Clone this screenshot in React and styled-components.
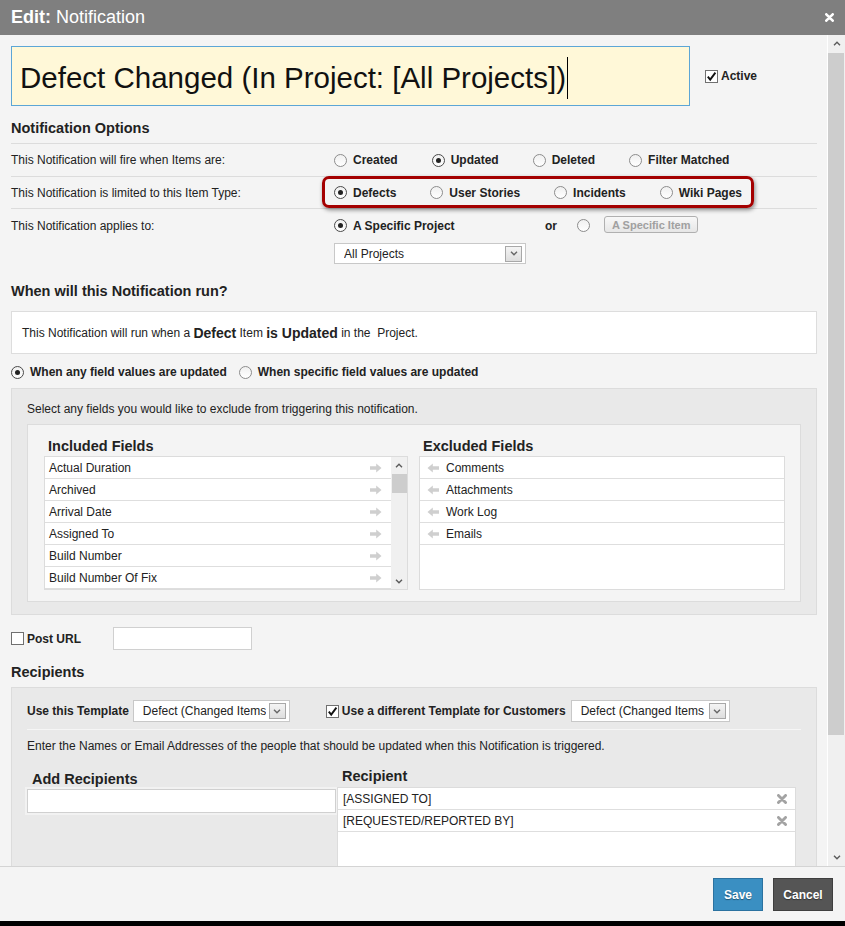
import React from 'react'
import styled, { createGlobalStyle } from 'styled-components'

const font = `"Liberation Sans", Arial, sans-serif`

const GlobalStyle = createGlobalStyle`
    html, body {
        margin: 0;
        background: #000;
    }
    body {
        font-family: ${font};
        font-size: 12px;
        color: #222;
    }
    * { box-sizing: border-box; }
`

const Dialog = styled.div`
    width: 845px;
    height: 921px;
    display: flex;
    flex-direction: column;
    background: #f4f4f4;
`
const TitleBar = styled.div`
    height: 35px;
    flex: 0 0 35px;
    background: #7f7f7f;
    color: #fff;
    font-size: 18px;
    display: flex;
    align-items: center;
    justify-content: space-between;
    padding: 0 11px 0 11px;

    b { font-weight: bold; }
`
const Body = styled.div`
    flex: 1 1 auto;
    display: flex;
    overflow: hidden;
`
const Content = styled.div`
    flex: 1 1 auto;
    padding: 11px 10px 0 11px;
    overflow: hidden;
`
const ScrollTrack = styled.div`
    width: 18px;
    flex: 0 0 18px;
    border-left: 1px solid #fff;
    background: #f0f0f0;
    display: flex;
    flex-direction: column;
`
const ScrollBtn = styled.div`
    height: 17px;
    flex: 0 0 17px;
    display: flex;
    align-items: center;
    justify-content: center;
`
const ScrollThumb = styled.div`
    height: ${p => p.$h}px;
    flex: 0 0 auto;
    margin: 1px 1px 0 0;
    background: #cdcdcd;
`
const ScrollRest = styled.div`
    flex: 1 1 auto;
`

const NameRow = styled.div`
    display: flex;
    align-items: center;
`
const NameInput = styled.div`
    width: 679px;
    height: 60px;
    background: #fff8d8;
    border: 1px solid #5ca6d6;
    display: flex;
    align-items: center;
    padding: 3px 0 0 8px;
    font-size: 29.5px;
    color: #111;
    white-space: nowrap;
`
const Caret = styled.span`
    display: inline-block;
    width: 1px;
    height: 42px;
    background: #000;
    margin-left: 1px;
`
const CheckLabel = styled.label`
    display: inline-flex;
    align-items: center;
    gap: 3px;
    font-weight: bold;
    font-size: 12px;
    margin-left: ${p => p.$ml || 0}px;
    margin-right: ${p => p.$mr || 0}px;
`
const Box = styled.span`
    width: 13px;
    height: 13px;
    flex: 0 0 13px;
    border: 1px solid #707070;
    background: #fff;
    display: inline-flex;
    align-items: center;
    justify-content: center;
`

const SectionTitle = styled.div`
    font-size: 14.5px;
    font-weight: bold;
    line-height: 17px;
    margin-top: ${p => p.$mt}px;
    margin-bottom: ${p => p.$mb}px;
`

const OptionTable = styled.div`
    border-top: 1px solid #dcdcdc;
`
const OptionRow = styled.div`
    position: relative;
    display: flex;
    align-items: ${p => p.$top ? 'flex-start' : 'center'};
    height: ${p => p.$h ? p.$h + 'px' : 'auto'};
    padding-top: ${p => p.$top ? 9 : 0}px;
    border-bottom: ${p => p.$last ? 'none' : '1px solid #dcdcdc'};
`
const RowLabel = styled.div`
    width: 323px;
    flex: 0 0 323px;
    line-height: 14px;
    padding-top: ${p => p.$pt || 0}px;
`
const OptionGroup = styled.div`
    display: flex;
    flex-direction: ${p => p.$col ? 'column' : 'row'};
    align-items: ${p => p.$col ? 'flex-start' : 'center'};
`
const OptionItem = styled.label`
    display: inline-flex;
    align-items: center;
    gap: 6px;
    font-weight: bold;
    font-size: 12px;
    line-height: 14px;
    margin-right: ${p => p.$mr ?? 34}px;
    width: ${p => p.$w ? p.$w + 'px' : 'auto'};
`
const Radio = styled.span`
    width: 13px;
    height: 13px;
    flex: 0 0 13px;
    border-radius: 50%;
    border: 1px solid ${p => p.$on ? '#4a4a4a' : '#8c8c8c'};
    background: linear-gradient(#f0f0f0, #fff);
    display: inline-flex;
    align-items: center;
    justify-content: center;

    &::after {
        content: '';
        width: 5px;
        height: 5px;
        border-radius: 50%;
        background: #222;
        display: ${p => p.$on ? 'block' : 'none'};
    }
`
const Highlight = styled.div`
    position: absolute;
    left: 311px;
    top: -1px;
    width: 432px;
    height: 32px;
    border: 3px solid #a40000;
    border-radius: 7px;
    box-shadow: 1px 2px 4px rgba(0, 0, 0, 0.45);
    pointer-events: none;
`
const OrText = styled.span`
    font-weight: bold;
    font-size: 12px;
    margin-right: 20px;
`
const DisabledButton = styled.span`
    display: inline-flex;
    align-items: center;
    height: 17px;
    padding: 0 7px;
    margin-left: 14px;
    margin-top: -2px;
    border: 1px solid #b0b0b0;
    border-radius: 3px;
    background: linear-gradient(#f8f8f8, #e6e6e6);
    color: #a0a0a0;
    font-weight: bold;
    font-size: 11px;
`

const SelectBox = styled.div`
    width: ${p => p.$w}px;
    height: ${p => p.$h || 22}px;
    margin-top: ${p => p.$mt || 0}px;
    background: #fff;
    border: 1px solid #c8c8c8;
    display: flex;
    align-items: center;
    padding: 0 3px 0 9px;
    overflow: hidden;
`
const SelectText = styled.span`
    flex: 1 1 auto;
    white-space: nowrap;
    overflow: hidden;
    font-size: 12px;
    color: #222;
`
const SelectBtn = styled.span`
    width: 17px;
    height: 16px;
    flex: 0 0 17px;
    margin-left: 3px;
    border: 1px solid #a8a8a8;
    background: linear-gradient(#f4f4f4, #dedede);
    display: inline-flex;
    align-items: center;
    justify-content: center;
`

const SummaryBox = styled.div`
    height: 43px;
    background: #fff;
    border: 1px solid #dddddd;
    display: flex;
    align-items: center;
    padding-left: 10px;
    font-size: 12px;

    b { font-size: 14px; }
`
const ScopeRow = styled.div`
    display: flex;
    align-items: center;
    height: 16px;
    margin-top: 10px;
`

const GrayPanel = styled.div`
    margin-top: ${p => p.$mt || 0}px;
    background: #e9e9e9;
    border: 1px solid #dcdcdc;
    padding: ${p => p.$pad};
`
const Note = styled.div`
    line-height: 14px;
    font-size: 12px;
    padding-top: ${p => p.$pt || 0}px;
`
const FieldsBox = styled.div`
    margin-top: 8px;
    background: #f4f4f4;
    border: 1px solid #dcdcdc;
    padding: 14px 16px 11px 16px;
    display: grid;
    grid-template-columns: 364px 366px;
    column-gap: 11px;
`
const ColTitle = styled.div`
    font-size: 14.5px;
    font-weight: bold;
    line-height: 14px;
    padding-left: ${p => p.$pl || 0}px;
    margin-top: ${p => p.$mt || 0}px;
    margin-bottom: ${p => p.$mb ?? 3}px;
`
const ListBox = styled.div`
    height: ${p => p.$h}px;
    background: #fff;
    border: 1px solid #dcdcdc;
    display: flex;
    overflow: hidden;
`
const ListRows = styled.div`
    flex: 1 1 auto;
`
const ListRow = styled.div`
    height: 22px;
    border-bottom: 1px solid #dedede;
    display: flex;
    align-items: center;
    gap: 7px;
    padding: ${p => p.$pad};
    justify-content: ${p => p.$spread ? 'space-between' : 'flex-start'};
    font-size: 12px;
    white-space: nowrap;
`
const MiniScroll = styled.div`
    width: 16px;
    flex: 0 0 16px;
    background: #f0f0f0;
    display: flex;
    flex-direction: column;
    align-items: center;
`
const MiniBtn = styled.div`
    height: 16px;
    display: flex;
    align-items: center;
    justify-content: center;
`
const MiniThumb = styled.div`
    width: 15px;
    height: 19px;
    margin-top: 1px;
    background: #cdcdcd;
`
const MiniRest = styled.div`
    flex: 1 1 auto;
`

const PostRow = styled.div`
    display: flex;
    align-items: center;
    margin-top: 12px;
    height: 23px;
`
const TextInput = styled.div`
    width: ${p => p.$w}px;
    height: ${p => p.$h}px;
    margin-left: ${p => p.$ml || 0}px;
    background: #fff;
    border: 1px solid #d0d0d0;
    box-shadow: ${p => p.$halo ? '0 0 0 2px #f2f2f2' : 'none'};
`

const TemplateRow = styled.div`
    display: flex;
    align-items: center;
    height: 22px;
`
const BoldLabel = styled.span`
    font-weight: bold;
    font-size: 12px;
    margin-right: ${p => p.$mr || 0}px;
`
const Divider = styled.div`
    margin-top: 7px;
    border-top: 1px solid #f6f6f6;
`
const RecipGrid = styled.div`
    display: grid;
    grid-template-columns: 310px 459px;
`
const RecipCol = styled.div`
    display: flex;
    flex-direction: column;
`
const RecipList = styled.div`
    height: 110px;
    background: #fff;
    border: 1px solid #dcdcdc;
`

const Footer = styled.div`
    height: 55px;
    flex: 0 0 55px;
    border-top: 1px solid #d4d4d4;
    background: #f4f4f4;
    display: flex;
    align-items: center;
    justify-content: flex-end;
    gap: 10px;
    padding: 0 12px 0 0;
`
const Button = styled.button`
    width: ${p => p.$w}px;
    height: 33px;
    margin-top: 1px;
    border: 1px solid ${p => p.$primary ? '#2b72a0' : '#3f3f3f'};
    background: ${p => p.$primary ? '#3a8fc2' : '#555555'};
    color: #fff;
    font-family: ${font};
    font-weight: bold;
    font-size: 12px;
    text-shadow: 0 1px 1px rgba(0, 0, 0, 0.4);
    padding: 0;
`

const Chevron = ({ down, color = '#5a5a5a' }) => (
    <svg width="8" height="5" viewBox="0 0 8 5">
        <path d={down ? 'M1 0.8L4 3.8L7 0.8' : 'M1 4.2L4 1.2L7 4.2'} stroke={color} strokeWidth="1.4" fill="none" />
    </svg>
)
const XIcon = ({ color, size = 9 }) => (
    <svg width={size} height={size} viewBox="0 0 9 9">
        <path d="M1.3 1.3L7.7 7.7M7.7 1.3L1.3 7.7" stroke={color} strokeWidth="2.6" strokeLinecap="round" />
    </svg>
)
const Arrow = ({ left }) => (
    <svg width="12" height="10" viewBox="0 0 12 10" style={left ? { transform: 'scaleX(-1)' } : null}>
        <path d="M0 3.3H6.2V0.5L11.5 5L6.2 9.5V6.7H0Z" fill="#cfcfcf" />
    </svg>
)
const Check = ({ on }) => (
    <Box>
        {on && (
            <svg width="11" height="11" viewBox="0 0 11 11">
                <path d="M1.8 5.6L4.2 8.6L9.4 1.6" stroke="#111" strokeWidth="1.9" fill="none" />
            </svg>
        )}
    </Box>
)
const Select = ({ w, h, mt, text }) => (
    <SelectBox $w={w} $h={h} $mt={mt}>
        <SelectText>{text}</SelectText>
        <SelectBtn><Chevron down color="#666" /></SelectBtn>
    </SelectBox>
)
const Option = ({ on, label, mr, w }) => (
    <OptionItem $mr={mr} $w={w}>
        <Radio $on={on} />
        {label}
    </OptionItem>
)

const included = ['Actual Duration', 'Archived', 'Arrival Date', 'Assigned To', 'Build Number', 'Build Number Of Fix']
const excluded = ['Comments', 'Attachments', 'Work Log', 'Emails']
const recipients = ['[ASSIGNED TO]', '[REQUESTED/REPORTED BY]']

export default function App() {
    return (
        <>
            <GlobalStyle />
            <Dialog>
                <TitleBar>
                    <span><b>Edit:</b> Notification</span>
                    <XIcon color="#fff" />
                </TitleBar>
                <Body>
                    <Content>
                        <NameRow>
                            <NameInput>Defect Changed (In Project: [All Projects])<Caret /></NameInput>
                            <CheckLabel $ml={15}><Check on />Active</CheckLabel>
                        </NameRow>

                        <SectionTitle $mt={14} $mb={6}>Notification Options</SectionTitle>
                        <OptionTable>
                            <OptionRow $h={33}>
                                <RowLabel>This Notification will fire when Items are:</RowLabel>
                                <OptionGroup>
                                    <Option label="Created" />
                                    <Option on label="Updated" />
                                    <Option label="Deleted" />
                                    <Option label="Filter Matched" />
                                </OptionGroup>
                            </OptionRow>
                            <OptionRow $h={32}>
                                <RowLabel>This Notification is limited to this Item Type:</RowLabel>
                                <OptionGroup>
                                    <Option on label="Defects" />
                                    <Option label="User Stories" />
                                    <Option label="Incidents" />
                                    <Option label="Wiki Pages" />
                                </OptionGroup>
                                <Highlight />
                            </OptionRow>
                            <OptionRow $top $last>
                                <RowLabel $pt={1}>This Notification applies to:</RowLabel>
                                <OptionGroup $col>
                                    <OptionGroup>
                                        <Option on label="A Specific Project" mr={0} w={211} />
                                        <OrText>or</OrText>
                                        <Radio />
                                        <DisabledButton>A Specific Item</DisabledButton>
                                    </OptionGroup>
                                    <Select w={192} h={21} mt={10} text="All Projects" />
                                </OptionGroup>
                            </OptionRow>
                        </OptionTable>

                        <SectionTitle $mt={19} $mb={11}>When will this Notification run?</SectionTitle>
                        <SummaryBox>
                            This Notification will run when a&nbsp;<b>Defect</b>&nbsp;Item&nbsp;<b>is Updated</b>&nbsp;in the&nbsp;&nbsp;Project.
                        </SummaryBox>
                        <ScopeRow>
                            <Option on label="When any field values are updated" mr={12} />
                            <Option label="When specific field values are updated" />
                        </ScopeRow>

                        <GrayPanel $mt={8} $pad="13px 15px 12px 15px">
                            <Note>Select any fields you would like to exclude from triggering this notification.</Note>
                            <FieldsBox>
                                <div>
                                    <ColTitle $pl={4}>Included Fields</ColTitle>
                                    <ListBox $h={134}>
                                        <ListRows>
                                            {included.map(f => (
                                                <ListRow key={f} $spread $pad="0 9px 0 4px">
                                                    {f}
                                                    <Arrow />
                                                </ListRow>
                                            ))}
                                        </ListRows>
                                        <MiniScroll>
                                            <MiniBtn><Chevron /></MiniBtn>
                                            <MiniThumb />
                                            <MiniRest />
                                            <MiniBtn><Chevron down /></MiniBtn>
                                        </MiniScroll>
                                    </ListBox>
                                </div>
                                <div>
                                    <ColTitle $pl={4}>Excluded Fields</ColTitle>
                                    <ListBox $h={134}>
                                        <ListRows>
                                            {excluded.map(f => (
                                                <ListRow key={f} $pad="0 0 0 7px">
                                                    <Arrow left />
                                                    {f}
                                                </ListRow>
                                            ))}
                                        </ListRows>
                                    </ListBox>
                                </div>
                            </FieldsBox>
                        </GrayPanel>

                        <PostRow>
                            <CheckLabel><Check />Post URL</CheckLabel>
                            <TextInput $w={139} $h={23} $ml={32} />
                        </PostRow>

                        <SectionTitle $mt={14} $mb={6}>Recipients</SectionTitle>
                        <GrayPanel $pad="12px 15px 0 15px">
                            <TemplateRow>
                                <BoldLabel $mr={4}>Use this Template</BoldLabel>
                                <Select w={157} text="Defect (Changed Items" />
                                <CheckLabel $ml={36} $mr={5}><Check on />Use a different Template for Customers</CheckLabel>
                                <Select w={159} text="Defect (Changed Items" />
                            </TemplateRow>
                            <Divider />
                            <Note $pt={9}>Enter the Names or Email Addresses of the people that should be updated when this Notification is triggered.</Note>
                            <RecipGrid>
                                <RecipCol>
                                    <ColTitle $pl={5} $mt={19} $mb={3}>Add Recipients</ColTitle>
                                    <TextInput $w={309} $h={24} $halo />
                                </RecipCol>
                                <RecipCol>
                                    <ColTitle $pl={5} $mt={16} $mb={4}>Recipient</ColTitle>
                                    <RecipList>
                                        {recipients.map(r => (
                                            <ListRow key={r} $spread $pad="0 8px 0 5px">
                                                {r}
                                                <XIcon color="#a3a3a3" size={10} />
                                            </ListRow>
                                        ))}
                                    </RecipList>
                                </RecipCol>
                            </RecipGrid>
                        </GrayPanel>
                    </Content>
                    <ScrollTrack>
                        <ScrollBtn><Chevron /></ScrollBtn>
                        <ScrollThumb $h={682} />
                        <ScrollRest />
                        <ScrollBtn><Chevron down /></ScrollBtn>
                    </ScrollTrack>
                </Body>
                <Footer>
                    <Button $primary $w={50}>Save</Button>
                    <Button $w={60}>Cancel</Button>
                </Footer>
            </Dialog>
        </>
    )
}
